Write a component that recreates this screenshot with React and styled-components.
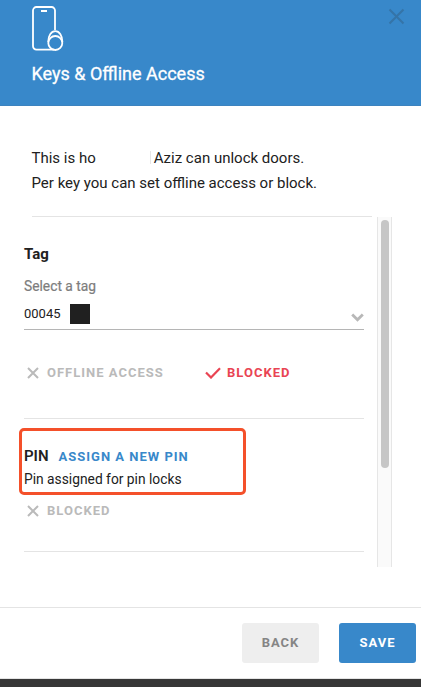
import React from 'react'
import styled, { createGlobalStyle } from 'styled-components'

const GlobalStyle = createGlobalStyle`
    * {
        box-sizing: border-box;
    }
    body {
        margin: 0;
        background-color: #373737;
        font-family: Roboto, "Liberation Sans", sans-serif;
        color: #212121;
    }
`;
const Dialog = styled.div`
    display: flex;
    flex-direction: column;
    width: 421px;
    height: 679px;
    background-color: #fff;
    border-bottom: 1px solid #e4e4e4;
`;
const Header = styled.header`
    display: flex;
    justify-content: space-between;
    height: 106px;
    padding: 5px 16px 0 31px;
    background-color: #3888ca;
    border-bottom: 1px solid #3d83bf;
`;
const HeaderInfo = styled.div`
    display: flex;
    flex-direction: column;
`;
const Title = styled.h1`
    margin: 10px 0 0;
    padding-left: 0.5px;
    font-size: 18px;
    line-height: 24px;
    font-weight: 400;
    color: #fff;
    -webkit-text-stroke: 0.3px #fff;
`;
const CloseButton = styled.button`
    align-self: flex-start;
    display: flex;
    margin-top: 3px;
    padding: 0;
    border: 0;
    background: none;
    cursor: pointer;
`;
const Intro = styled.div`
    height: 111px;
    margin: 0 49px 0 32px;
    padding-top: 40px;
    border-bottom: 1px solid #e4e4e4;
`;
const IntroLine = styled.p`
    display: flex;
    align-items: center;
    margin: 0 0 0 -0.5px;
    font-size: 15px;
    line-height: 25px;
    white-space: pre;
`;
const Redacted = styled.span`
    width: 55px;
    height: 13px;
    margin: -3px 3px 0 0;
    border-right: 1px solid #e6e6e6;
`;
const ScrollArea = styled.div`
    display: flex;
    justify-content: space-between;
    height: 350px;
    padding: 0 29px 0 24px;
`;
const List = styled.div`
    width: 340px;
`;
const Track = styled.div`
    width: 15px;
    padding: 3px 2px 0 3px;
    background-color: #fafafa;
    border: solid #e6e6e6;
    border-width: 0 1px;
`;
const Thumb = styled.div`
    width: 8px;
    height: 248px;
    border-radius: 4px;
    background-color: #c6c6c6;
`;
const TagSection = styled.section`
    height: 202px;
    padding-top: 27px;
    border-bottom: 1px solid #e4e4e4;
`;
const PinSection = styled.section`
    position: relative;
    height: 133px;
    padding-top: 27px;
    border-bottom: 1px solid #e4e4e4;
`;
const SectionTitle = styled.h2`
    margin: 0;
    font-size: 15px;
    line-height: 20px;
    font-weight: ${props => props.$weight || 700};
`;
const Label = styled.div`
    margin-top: 12px;
    font-size: 13.8px;
    line-height: 20px;
    color: #7d7d7d;
    -webkit-text-stroke: 0.2px #7d7d7d;
`;
const Select = styled.div`
    display: flex;
    align-items: center;
    height: 34px;
    padding-top: 2px;
    border-bottom: 1px solid #b5b5b5;
    font-size: 13px;
`;
const Swatch = styled.span`
    width: 20px;
    height: 20px;
    margin-left: 9px;
    background-color: #202020;
`;
const Arrow = styled.svg`
    margin: 7px 0 0 auto;
`;
const Options = styled.div`
    display: flex;
    align-items: center;
    height: 20px;
    margin-top: ${props => props.$top};
    padding-left: 3px;
`;
const Option = styled.div`
    display: flex;
    align-items: center;
    gap: ${props => (props.$active ? '6px' : '8px')};
    width: ${props => props.$width || 'auto'};
    font-size: 13px;
    line-height: 20px;
    font-weight: 700;
    letter-spacing: 1px;
    color: ${props => (props.$active ? '#e94453' : '#bababa')};
`;
const PinHeader = styled.div`
    display: flex;
    align-items: flex-start;
    gap: 10px;
`;
const LinkButton = styled.button`
    padding: 1px 0 0;
    border: 0;
    background: none;
    font-family: inherit;
    font-size: 13px;
    line-height: 20px;
    font-weight: 700;
    letter-spacing: 1px;
    color: #3888ca;
    cursor: pointer;
`;
const PinText = styled.p`
    margin: 2px 0 0;
    font-size: 13.8px;
    line-height: 20px;
`;
// marker around the pin block
const Highlight = styled.div`
    position: absolute;
    top: 9px;
    left: -5px;
    width: 227px;
    height: 67px;
    border: 3px solid #f4502a;
    border-radius: 5px;
`;
const Footer = styled.footer`
    display: flex;
    justify-content: flex-end;
    gap: 20px;
    margin-top: 40px;
    padding: 15px 5px 0 0;
    border-top: 1px solid #e4e4e4;
`;
const Button = styled.button`
    width: 77px;
    height: 40px;
    padding: 0 0 2px;
    border: 0;
    border-radius: 3px;
    font-family: inherit;
    font-size: 13px;
    font-weight: 700;
    letter-spacing: 1px;
    color: ${props => (props.$primary ? '#fff' : '#858585')};
    background-color: ${props => (props.$primary ? '#3888ca' : '#eee')};
    cursor: pointer;
`;

function PhoneIcon() {
  return (
    <svg width="33" height="47" viewBox="0 0 33 47" fill="none" stroke="#fff" strokeWidth="1.8">
      <path d="M24 25V5.500a3.500 3.500 0 0 0-3.500-3.500H5.500A3.500 3.500 0 0 0 2 5.500v35.500A3.500 3.500 0 0 0 5.500 44.600H23" />
      <path d="M10 6h6" strokeWidth="2" />
      <circle cx="24.300" cy="38" r="7" />
      <path d="M17.200 37c0-6.500 3-10.800 7.100-10.800s7.100 4.300 7.100 10.800" />
    </svg>
  )
}

function Cross() {
  return (
    <svg width="12" height="12" viewBox="0 0 12 12" fill="none" stroke="currentColor" strokeWidth="2">
      <path d="M1 1l10 10M11 1L1 11" />
    </svg>
  )
}

function Check() {
  return (
    <svg width="16" height="12" viewBox="0 0 16 12" fill="none" stroke="currentColor" strokeWidth="2.200">
      <path d="M1 5.500l5 5L15 1.200" />
    </svg>
  )
}

function App() {
  return (
    <>
      <GlobalStyle />
      <Dialog>
        <Header>
          <HeaderInfo>
            <PhoneIcon />
            <Title>Keys &amp; Offline Access</Title>
          </HeaderInfo>
          <CloseButton aria-label="Close">
            <svg width="17" height="17" viewBox="0 0 17 17" fill="none" stroke="#3574a8" strokeWidth="2">
              <path d="M1.500 1.500l14 14M15.500 1.500l-14 14" />
            </svg>
          </CloseButton>
        </Header>
        <Intro>
          <IntroLine>This is ho<Redacted />Aziz can unlock doors.</IntroLine>
          <IntroLine>Per key you can set offline access or block.</IntroLine>
        </Intro>
        <ScrollArea>
          <List>
            <TagSection>
              <SectionTitle>Tag</SectionTitle>
              <Label>Select a tag</Label>
              <Select>
                00045
                <Swatch />
                <Arrow width="13" height="9" viewBox="0 0 13 9" fill="none" stroke="#b8b8b8" strokeWidth="2.800">
                  <path d="M1.200 1.500l5.300 5.300 5.300-5.300" />
                </Arrow>
              </Select>
              <Options $top="33px">
                <Option $width="178px"><Cross />OFFLINE ACCESS</Option>
                <Option $active><Check />BLOCKED</Option>
              </Options>
            </TagSection>
            <PinSection>
              <PinHeader>
                <SectionTitle $weight={600}>PIN</SectionTitle>
                <LinkButton>ASSIGN A NEW PIN</LinkButton>
              </PinHeader>
              <PinText>Pin assigned for pin locks</PinText>
              <Options $top="12px">
                <Option><Cross />BLOCKED</Option>
              </Options>
              <Highlight />
            </PinSection>
          </List>
          <Track>
            <Thumb />
          </Track>
        </ScrollArea>
        <Footer>
          <Button>BACK</Button>
          <Button $primary>SAVE</Button>
        </Footer>
      </Dialog>
    </>
  )
}

export default App
